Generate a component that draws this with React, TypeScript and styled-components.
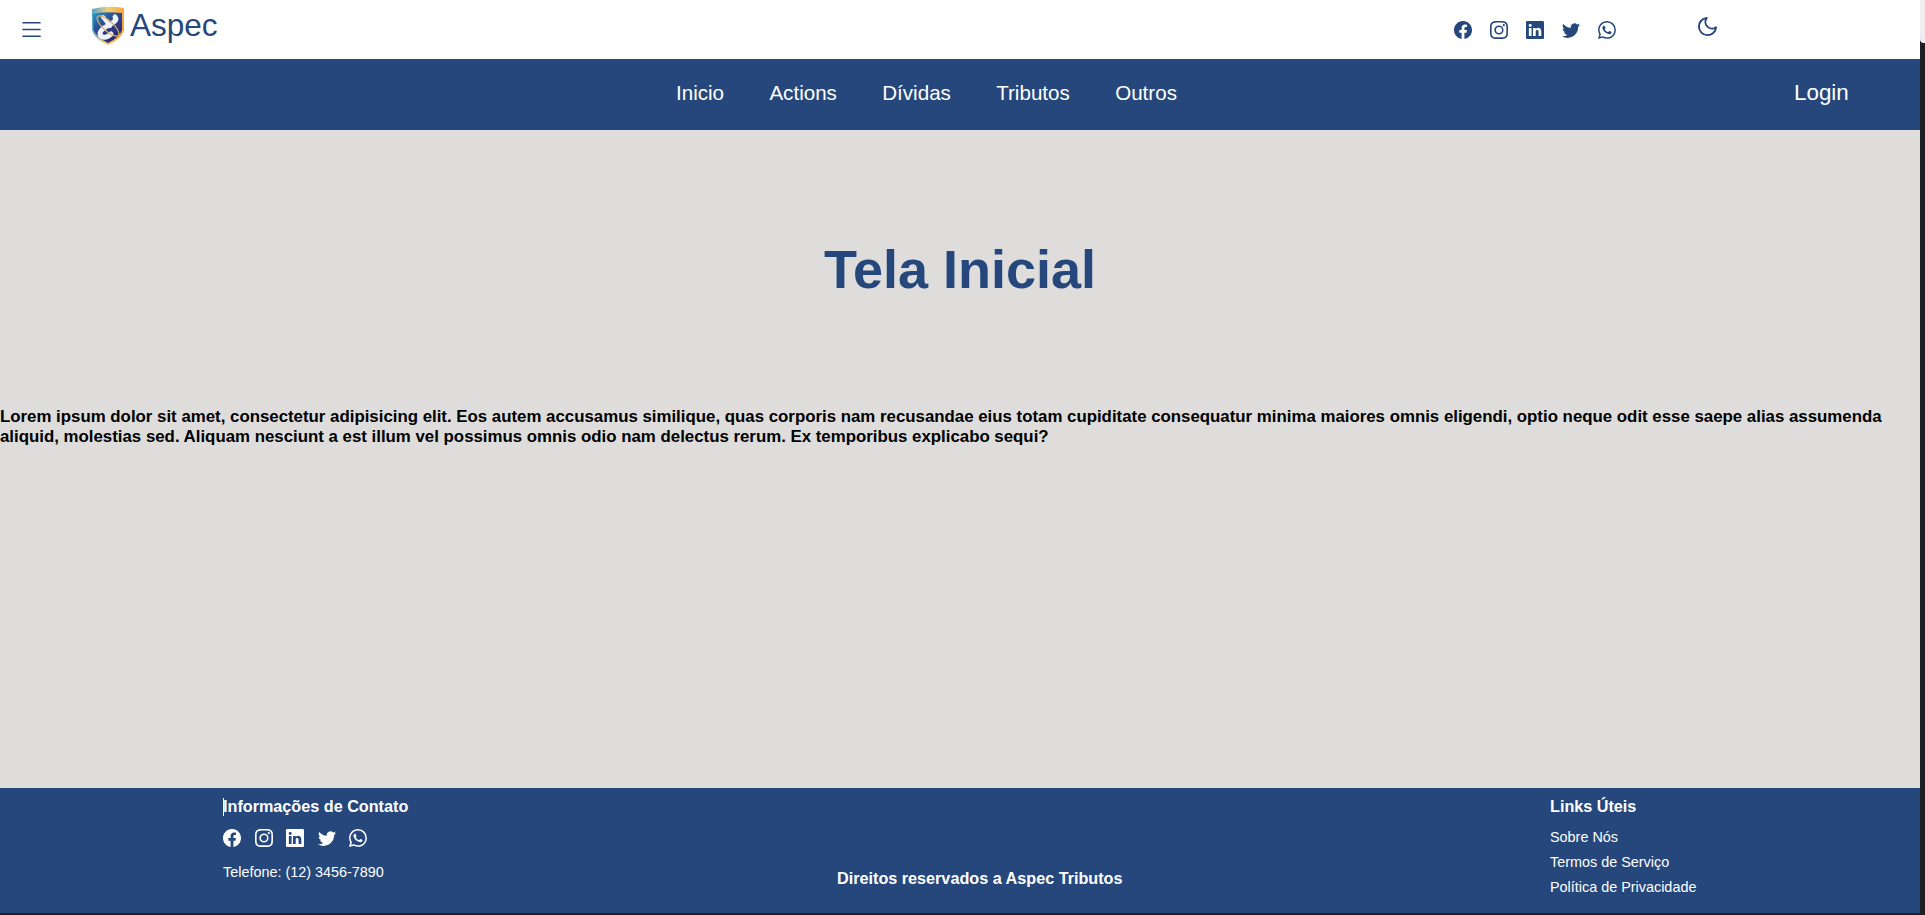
import React from "react";
import styled, { createGlobalStyle } from "styled-components";
import { BsFacebook, BsInstagram, BsLinkedin, BsTwitter, BsWhatsapp, BsList } from "react-icons/bs";
import { FiMoon } from "react-icons/fi";

const NAVY = "#25477b";

const Global = createGlobalStyle`
  html, body { margin: 0; padding: 0; background: #1e1f22; overflow: hidden; }
  body { font-family: "Liberation Sans", Arial, sans-serif; }
`;

const Page = styled.div`
  position: relative;
  width: 1925px;
  height: 915px;
  background: #1e1f22;
  overflow: hidden;
`;
const Thumb = styled.div`
  position: absolute;
  top: 0;
  right: 0;
  width: 5px;
  height: 43px;
  background: #eeeef0;
  border-radius: 0 0 0 4px;
`;
const Shell = styled.div`
  width: 1920px;
  height: 913px;
  display: flex;
  flex-direction: column;
`;
const TopBar = styled.header`
  height: 59px;
  flex: none;
  background: #fff;
  display: flex;
  align-items: flex-start;
  color: ${NAVY};
`;
const MenuButton = styled.div`
  width: 91px;
  flex: none;
  padding: 16px 0 0 18px;
  box-sizing: border-box;
  font-size: 27px;
  line-height: 0;
`;
const Brand = styled.div`
  display: flex;
  align-items: flex-start;
  gap: 5px;
  width: 1363px;
  flex: none;
  padding-top: 6px;
`;
const BrandName = styled.span`
  font-size: 31.5px;
  line-height: 38px;
`;
const Socials = styled.div<{ $size: number; $gap: number }>`
  display: flex;
  gap: ${(p) => p.$gap}px;
  font-size: ${(p) => p.$size}px;
  line-height: 0;
`;
const TopSocials = styled(Socials)`
  width: 242px;
  flex: none;
  padding-top: 21px;
`;
const MoonSlot = styled.div`
  padding-top: 15px;
  font-size: 23px;
  line-height: 0;
`;
const NavBar = styled.nav`
  height: 71px;
  flex: none;
  background: ${NAVY};
  color: #fff;
  display: flex;
  align-items: center;
  padding: 0 0 3px 676px;
  box-sizing: border-box;
`;
const NavLinks = styled.div`
  display: flex;
  gap: 45.3px;
  width: 1118px;
  flex: none;
  font-size: 20.6px;
`;
const Login = styled.span`
  font-size: 22.4px;
`;
const Main = styled.main`
  flex: 1;
  background: #dedddc;
`;
const Title = styled.h1`
  margin: 0;
  padding-top: 107px;
  text-align: center;
  color: ${NAVY};
  font-size: 54px;
  line-height: 64px;
  font-weight: 700;
`;
const Lorem = styled.p`
  margin: 106px 0 0;
  color: #000;
  font-size: 16.83px;
  line-height: 20px;
  font-weight: 700;
`;
const Footer = styled.footer`
  height: 125px;
  flex: none;
  background: ${NAVY};
  color: #fff;
  display: flex;
  box-sizing: border-box;
  padding: 9px 0 0 223px;
`;
const ContactCol = styled.div`
  width: 614px;
  flex: none;
  position: relative;
`;
const Heading = styled.div`
  font-size: 16.2px;
  line-height: 18px;
  font-weight: 700;
`;
const Caret = styled.span`
  position: absolute;
  left: 0;
  top: 1px;
  width: 1px;
  height: 18px;
  background: #fff;
`;
const FooterSocials = styled(Socials)`
  margin-top: 14px;
`;
const Phone = styled.div`
  margin-top: 16px;
  font-size: 14.4px;
  line-height: 18px;
`;
const Rights = styled.div`
  width: 713px;
  flex: none;
  padding-top: 72px;
  font-size: 16.2px;
  line-height: 18px;
  font-weight: 700;
`;
const LinksCol = styled.div`
  display: flex;
  flex-direction: column;
`;
const LinkList = styled.div`
  margin-top: 10px;
`;
const UsefulLink = styled.div`
  font-size: 14.4px;
  line-height: 25px;
`;

const socialIcons = [BsFacebook, BsInstagram, BsLinkedin, BsTwitter, BsWhatsapp];

export default function App() {
  return (
    <Page>
      <Global />
      <Thumb />
      <Shell>
        <TopBar>
          <MenuButton><BsList /></MenuButton>
          <Brand>
            <svg width="34" height="40" viewBox="0 0 34 40">
              <defs>
                <linearGradient id="rim" x1="0" y1="0" x2="1" y2="0.1">
                  <stop offset="0" stopColor="#4aa5d4" />
                  <stop offset="0.5" stopColor="#f5cd75" />
                  <stop offset="1" stopColor="#f8a63a" />
                </linearGradient>
                <linearGradient id="fill" x1="0" y1="0" x2="0.7" y2="1">
                  <stop offset="0" stopColor="#2a9aca" />
                  <stop offset="0.4" stopColor="#2a4f98" />
                  <stop offset="1" stopColor="#2e2270" />
                </linearGradient>
              </defs>
              <path d="M1 3 Q17 -1 33 2 L33 24 Q31 33 17 39 Q3 33 1 24Z" fill="url(#rim)" />
              <path d="M2 8 Q10 5 31 7 L31 24 Q29 31 17 37 Q5 31 2.5 24Z" fill="url(#fill)" />
              <path d="M24 11 C29 17 10 20 9 27 C9 32 15 33 20 28" fill="none" stroke="#f0f1f7" strokeWidth="5" strokeLinecap="round" />
              <path d="M12 11 C14 13 16 17 19 20" fill="none" stroke="#f0f1f7" strokeWidth="4" strokeLinecap="round" />
              <ellipse cx="17" cy="20" rx="14" ry="5" transform="rotate(42 17 20)" fill="none" stroke="#d9b25c" strokeWidth="1.2" />
            </svg>
            <BrandName>Aspec</BrandName>
          </Brand>
          <TopSocials $size={18} $gap={18}>
            {socialIcons.map((I, i) => <I key={i} />)}
          </TopSocials>
          <MoonSlot><FiMoon /></MoonSlot>
        </TopBar>
        <NavBar>
          <NavLinks>
            <span>Inicio</span>
            <span>Actions</span>
            <span>Dívidas</span>
            <span>Tributos</span>
            <span>Outros</span>
          </NavLinks>
          <Login>Login</Login>
        </NavBar>
        <Main>
          <Title>Tela Inicial</Title>
          <Lorem>
            Lorem ipsum dolor sit amet, consectetur adipisicing elit. Eos autem accusamus similique, quas corporis nam recusandae eius totam cupiditate consequatur minima maiores omnis eligendi, optio neque odit esse saepe alias assumenda aliquid, molestias sed. Aliquam nesciunt a est illum vel possimus omnis odio nam delectus rerum. Ex temporibus explicabo sequi?
          </Lorem>
        </Main>
        <Footer>
          <ContactCol>
            <Caret />
            <Heading>Informações de Contato</Heading>
            <FooterSocials $size={18} $gap={13.5}>
              {socialIcons.map((I, i) => <I key={i} />)}
            </FooterSocials>
            <Phone>Telefone: (12) 3456-7890</Phone>
          </ContactCol>
          <Rights>Direitos reservados a Aspec Tributos</Rights>
          <LinksCol>
            <Heading>Links Úteis</Heading>
            <LinkList>
              <UsefulLink>Sobre Nós</UsefulLink>
              <UsefulLink>Termos de Serviço</UsefulLink>
              <UsefulLink>Política de Privacidade</UsefulLink>
            </LinkList>
          </LinksCol>
        </Footer>
      </Shell>
    </Page>
  );
}
